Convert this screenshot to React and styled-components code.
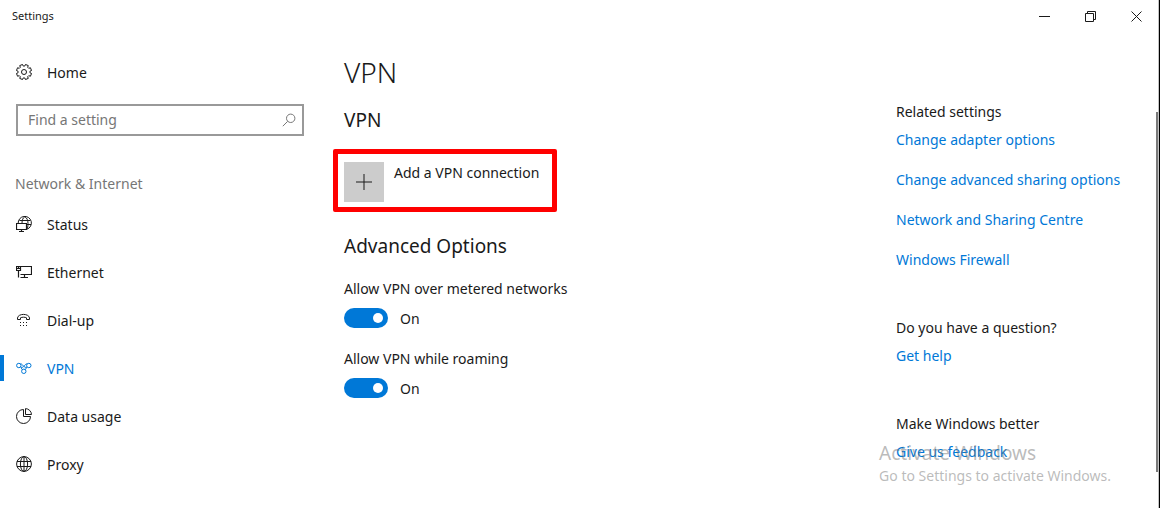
import { useState } from "react"
import styled, { createGlobalStyle, ThemeProvider } from "styled-components"

const theme = {
  colors: {
    accent: "#0078d7",
    text: "#1a1a1a",
    muted: "#767676",
    tile: "#cccccc",
    border: "#999999",
    highlight: "#ff0000",
  },
};

const GlobalStyle = createGlobalStyle`
  * {
    box-sizing: border-box;
  }
  body {
    margin: 0;
    background: #ffffff;
    color: ${(props) => props.theme.colors.text};
    font-family: "Noto Sans", "Segoe UI", sans-serif;
    font-size: 14px;
    line-height: 20px;
  }
  button, input {
    font: inherit;
    color: inherit;
  }
`;

const Window = styled.div`
  position: relative;
  min-height: 100vh;
  border-right: 1px solid #000000;
  box-shadow: inset -1px 0 #c4c4c4;
  overflow: hidden;
`;
const TitleBar = styled.header`
  display: flex;
  justify-content: space-between;
  align-items: center;
  height: 32px;
  padding-left: 12px;
  font-size: 11px;
`;
const WindowButtons = styled.div`
  display: flex;
`;
const WindowButton = styled.button`
  display: flex;
  align-items: center;
  justify-content: center;
  width: 46px;
  height: 32px;
  padding: 0;
  border: none;
  background: none;
`;
const Layout = styled.div`
  display: grid;
  grid-template-columns: 344px 1fr 263px;
`;

const Sidebar = styled.nav`
  padding: 16px 40px 0 0;
`;
const NavItem = styled.a`
  display: flex;
  align-items: center;
  gap: 15px;
  height: 48px;
  padding-left: 12px;
  color: ${(props) => (props.$active ? props.theme.colors.accent : props.theme.colors.text)};
  text-decoration: none;
  border-left: 4px solid transparent;
  border-image: ${(props) =>
    props.$active
      ? `linear-gradient(transparent 25%, ${props.theme.colors.accent} 25% 75%, transparent 75%) 1`
      : "none"};
  border-image-width: 0 0 0 4px;
`;
const NavLabel = styled.span`
  padding-top: 2px;
`;
const SearchBox = styled.label`
  display: flex;
  align-items: center;
  height: 32px;
  margin: 8px 0 0 16px;
  padding: 0 6px 0 10px;
  border: 2px solid ${(props) => props.theme.colors.border};
  color: ${(props) => props.theme.colors.muted};
`;
const SearchInput = styled.input`
  flex: 1;
  min-width: 0;
  padding: 0;
  border: none;
  outline: none;
  background: none;
  &::placeholder {
    color: ${(props) => props.theme.colors.muted};
    opacity: 1;
  }
`;
const NavHeading = styled.h2`
  margin: 38px 0 6px 15px;
  font-size: 14px;
  font-weight: normal;
  color: ${(props) => props.theme.colors.muted};
`;

const Content = styled.main`
  padding-top: 24px;
`;
const PageTitle = styled.h1`
  margin: 0;
  font-size: 28px;
  line-height: 32px;
  font-weight: 300;
`;
const SectionTitle = styled.h2`
  margin: ${(props) => props.$top} 0 0;
  font-size: 19px;
  line-height: 24px;
  font-weight: normal;
`;
const AddButton = styled.button`
  display: flex;
  align-items: flex-start;
  gap: 10px;
  margin: 17px 0 0 -11px;
  padding: 8px 13px 5px 6px;
  border: 5px solid ${(props) => props.theme.colors.highlight};
  border-radius: 2px;
  background: none;
  line-height: 22px;
`;
const Tile = styled.span`
  display: flex;
  align-items: center;
  justify-content: center;
  width: 40px;
  height: 40px;
  background-color: ${(props) => props.theme.colors.tile};
`;
const Option = styled.div`
  margin-top: 20px;
`;
const OptionLabel = styled.label`
  display: block;
  line-height: 22px;
`;
const ToggleRow = styled.div`
  display: flex;
  align-items: flex-start;
  gap: 12px;
  margin-top: 8px;
  height: 20px;
  line-height: 22px;
`;
const Switch = styled.input`
  appearance: none;
  display: flex;
  align-items: center;
  justify-content: ${(props) => (props.checked ? "flex-end" : "flex-start")};
  width: 44px;
  height: 20px;
  margin: 0;
  padding: 0 5px;
  border-radius: 10px;
  background-color: ${(props) => (props.checked ? props.theme.colors.accent : props.theme.colors.border)};
  &::before {
    content: "";
    width: 10px;
    height: 10px;
    border-radius: 50%;
    background-color: #ffffff;
  }
`;

const Aside = styled.aside`
  padding-top: 70px;
`;
const LinkGroup = styled.section`
  display: flex;
  flex-direction: column;
  align-items: flex-start;
  gap: 20px;
  margin-bottom: 48px;
`;
const GroupTitle = styled.h3`
  margin: 0 0 -12px;
  font-size: 14px;
  font-weight: normal;
`;
const TextLink = styled.a`
  color: ${(props) => props.theme.colors.accent};
  text-decoration: none;
`;

const ScrollThumb = styled.div`
  position: absolute;
  top: 112px;
  right: 1px;
  bottom: 38px;
  width: 2px;
  background-color: #7a7a7a;
`;
const Watermark = styled.div`
  position: absolute;
  right: 48px;
  bottom: 24px;
  color: rgba(120, 120, 120, 0.5);
  pointer-events: none;
`;
const WatermarkTitle = styled.p`
  margin: 0;
  font-size: 19px;
  line-height: 26px;
`;
const WatermarkText = styled.p`
  margin: 0;
`;

function Icon({ size = 16, children }) {
  return (
    <svg width={size} height={size} viewBox={`0 0 ${size} ${size}`} fill="none" stroke="currentColor" strokeWidth="1" aria-hidden="true">
      {children}
    </svg>
  )
}

// Gear outline with eight rounded teeth
function gearPath() {
  const points = [];
  for (let i = 0; i < 8; i++) {
    const a = ((i + 0.5) * Math.PI) / 4;
    [[-0.26, 6], [-0.2, 7.7], [0.2, 7.7], [0.26, 6]].forEach(([da, r]) => {
      points.push(`${(8 + r * Math.sin(a + da)).toFixed(2)} ${(8 - r * Math.cos(a + da)).toFixed(2)}`);
    });
  }
  return `M${points.join("L")}Z`;
}

const icons = {
  home: (
    <>
      <path d={gearPath()} strokeLinejoin="round" />
      <circle cx="8" cy="8" r="2.5" />
    </>
  ),
  status: (
    <>
      <path d="M2.2 7.2A6.6 6.6 0 1 1 11 13.2M3.4 4.5H14.2M10.5 8.5H15M6 7C6 4 7 1.8 8.8 .7C10.8 1.8 12 4 12 7.5S11.6 11.8 10.8 13" />
      <path d="M.5 7.5H10.5V13.5H.5ZM5.5 13.5V15.5M3 15.5H8" strokeWidth="1.2" />
    </>
  ),
  ethernet: (
    <>
      <path d="M5 2.5H15.5V10.5H4.5M8.5 10.5V13.5M4.5 13.5H12M2.5 7V13.5" strokeWidth="1.2" />
      <path d="M.5 2.5H4.5V6.5H.5ZM.5 4.5H4.5M2.5 3V5" strokeWidth="1.2" />
    </>
  ),
  dialup: (
    <>
      <path d="M1.5 7.5V6C2 1.2 13 1.2 13.5 6V7.5H10.5V5.8C9 5 6 5 4.5 5.8V7.5Z" strokeLinejoin="round" />
      <path d="M4 10.5H11M4 13.5H11" strokeDasharray="1 2" />
    </>
  ),
  vpn: (
    <g>
      <circle cx="2.8" cy="5.5" r="2.2" />
      <circle cx="12.8" cy="5.5" r="2.2" />
      <circle cx="7.8" cy="11.3" r="2.2" />
      <path d="M4.4 3.9C6.5 3.2 8 8.5 10.8 7.2M11.2 3.9C9 3.2 8 8.5 4.8 7.2M6.2 9.6L5 7.4M9.4 9.6L10.6 7.4" />
    </g>
  ),
  data: (
    <>
      <path d="M7.5 1.5A7 7 0 1 0 14.5 8.5H7.5Z" />
      <path d="M9.5 .6V6.5H15.5A6.2 6.2 0 0 0 9.5 .6Z" />
    </>
  ),
  proxy: (
    <>
      <circle cx="8" cy="8" r="7.4" />
      <ellipse cx="8" cy="8" rx="3.6" ry="7.4" />
      <path d="M8 .5V15.5M1 5.5H15M1 10.5H15" />
    </>
  ),
};

const navItems = [
  { icon: "status", label: "Status" },
  { icon: "ethernet", label: "Ethernet" },
  { icon: "dialup", label: "Dial-up" },
  { icon: "vpn", label: "VPN", active: true },
  { icon: "data", label: "Data usage" },
  { icon: "proxy", label: "Proxy" },
];

const linkGroups = [
  {
    title: "Related settings",
    links: ["Change adapter options", "Change advanced sharing options", "Network and Sharing Centre", "Windows Firewall"],
  },
  { title: "Do you have a question?", links: ["Get help"] },
  { title: "Make Windows better", links: ["Give us feedback"] },
];

function Toggle({ id, label }) {
  const [on, setOn] = useState(true);
  return (
    <Option>
      <OptionLabel htmlFor={id}>{label}</OptionLabel>
      <ToggleRow>
        <Switch type="checkbox" role="switch" id={id} checked={on} onChange={() => setOn(!on)} />
        <span>{on ? "On" : "Off"}</span>
      </ToggleRow>
    </Option>
  )
}

export default function App() {
  return (
    <ThemeProvider theme={theme}>
      <GlobalStyle />
      <Window>
        <TitleBar>
          <span>Settings</span>
          <WindowButtons>
            <WindowButton aria-label="Minimise">
              <Icon size={11}><path d="M0 5.5H11" /></Icon>
            </WindowButton>
            <WindowButton aria-label="Restore">
              <Icon size={11}><path d="M.5 2.5H8.5V10.5H.5ZM2.5 2.5V.5H10.5V8.5H8.5" /></Icon>
            </WindowButton>
            <WindowButton aria-label="Close">
              <Icon size={11}><path d="M.5 .5L10.5 10.5M10.5 .5L.5 10.5" /></Icon>
            </WindowButton>
          </WindowButtons>
        </TitleBar>
        <Layout>
          <Sidebar>
            <NavItem href="#home">
              <Icon>{icons.home}</Icon>
              <NavLabel>Home</NavLabel>
            </NavItem>
            <SearchBox>
              <SearchInput type="text" placeholder="Find a setting" aria-label="Find a setting" />
              <Icon size={14}>
                <circle cx="8.7" cy="5.3" r="4.2" />
                <path d="M5.7 8.3L.8 13.2" />
              </Icon>
            </SearchBox>
            <NavHeading>Network &amp; Internet</NavHeading>
            {navItems.map((item) => (
              <NavItem key={item.icon} href={`#${item.icon}`} $active={item.active}>
                <Icon>{icons[item.icon]}</Icon>
                <NavLabel>{item.label}</NavLabel>
              </NavItem>
            ))}
          </Sidebar>
          <Content>
            <PageTitle>VPN</PageTitle>
            <SectionTitle $top="20px">VPN</SectionTitle>
            <AddButton>
              <Tile>
                <Icon><path d="M8 0V16M0 8H16" /></Icon>
              </Tile>
              Add a VPN connection
            </AddButton>
            <SectionTitle $top="22px">Advanced Options</SectionTitle>
            <Toggle id="metered" label="Allow VPN over metered networks" />
            <Toggle id="roaming" label="Allow VPN while roaming" />
          </Content>
          <Aside>
            {linkGroups.map((group) => (
              <LinkGroup key={group.title}>
                <GroupTitle>{group.title}</GroupTitle>
                {group.links.map((link) => (
                  <TextLink key={link} href="#">{link}</TextLink>
                ))}
              </LinkGroup>
            ))}
          </Aside>
        </Layout>
        <ScrollThumb />
        <Watermark>
          <WatermarkTitle>Activate Windows</WatermarkTitle>
          <WatermarkText>Go to Settings to activate Windows.</WatermarkText>
        </Watermark>
      </Window>
    </ThemeProvider>
  )
}
